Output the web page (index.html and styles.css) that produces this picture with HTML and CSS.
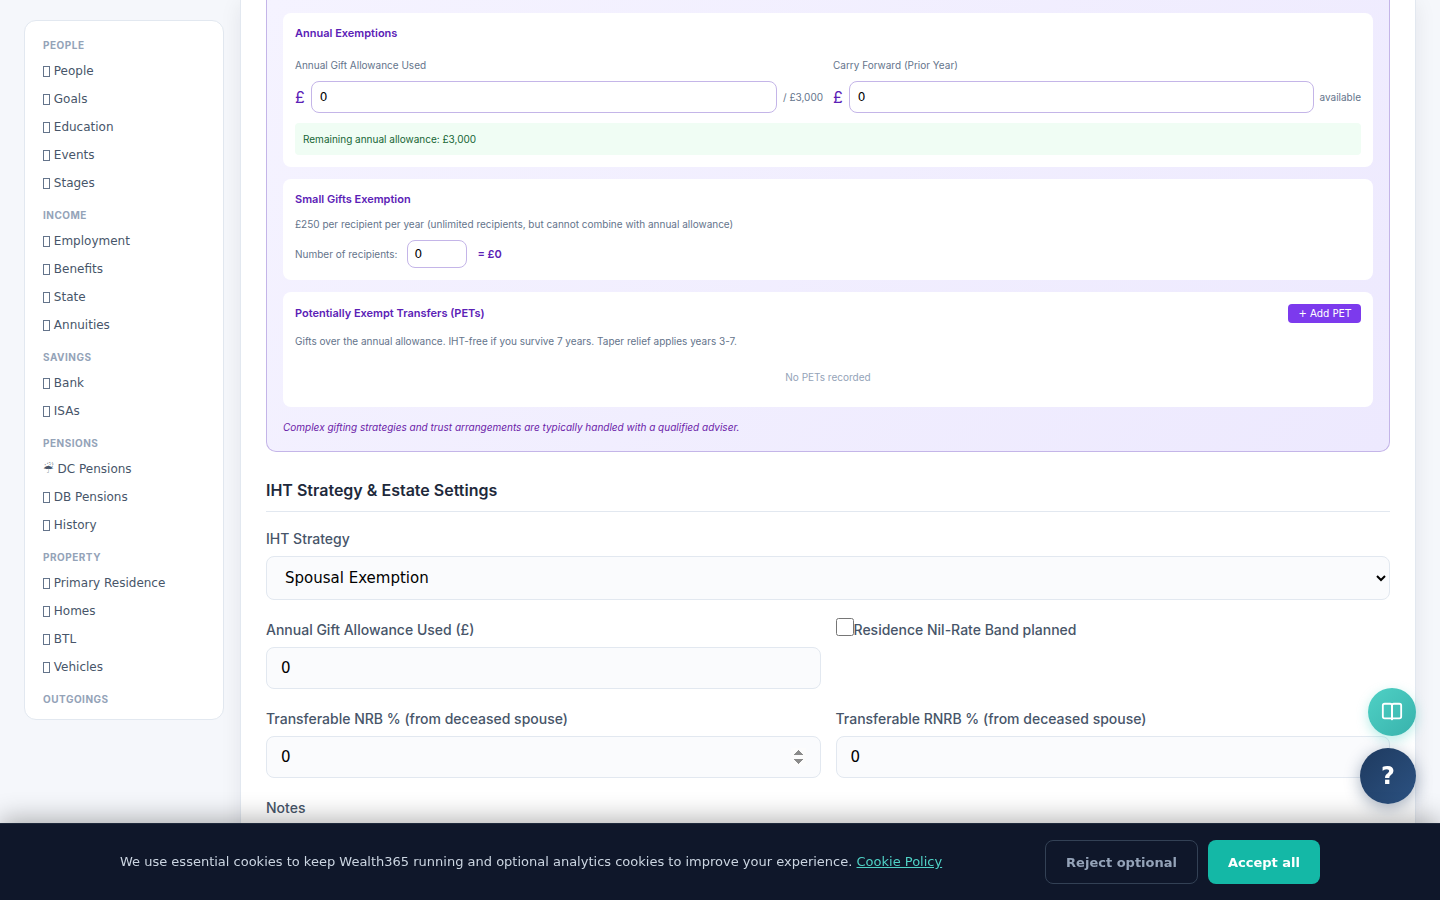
FILE: index.html
```
<!DOCTYPE html>
<html lang="en-GB">
<head>
    <meta charset="UTF-8">
    <meta name="viewport" content="width=device-width, initial-scale=1.0">
    <title>Wealth365 - Estate Planning</title>
    <link rel="stylesheet" href="styles.css">
</head>
<body>
    <div class="layout">
        <nav class="sidebar">
            <h4>People</h4>
            <a href="#people"><span class="icon"></span> People</a>
            <a href="#goals"><span class="icon"></span> Goals</a>
            <a href="#education"><span class="icon"></span> Education</a>
            <a href="#events"><span class="icon"></span> Events</a>
            <a href="#stages"><span class="icon"></span> Stages</a>
            <h4>Income</h4>
            <a href="#employment"><span class="icon"></span> Employment</a>
            <a href="#benefits"><span class="icon"></span> Benefits</a>
            <a href="#state"><span class="icon"></span> State</a>
            <a href="#annuities"><span class="icon"></span> Annuities</a>
            <h4>Savings</h4>
            <a href="#bank"><span class="icon"></span> Bank</a>
            <a href="#isas"><span class="icon"></span> ISAs</a>
            <h4>Pensions</h4>
            <a href="#dc">☔&#xFE0E; DC Pensions</a>
            <a href="#db"><span class="icon"></span> DB Pensions</a>
            <a href="#history"><span class="icon"></span> History</a>
            <h4>Property</h4>
            <a href="#residence"><span class="icon"></span> Primary Residence</a>
            <a href="#homes"><span class="icon"></span> Homes</a>
            <a href="#btl"><span class="icon"></span> BTL</a>
            <a href="#vehicles"><span class="icon"></span> Vehicles</a>
            <h4>Outgoings</h4>
        </nav>

        <main class="content">
            <section class="gifting">
                <div class="gift-card">
                    <h5>Annual Exemptions</h5>
                    <div class="gift-grid">
                        <div>
                            <label for="giftUsed">Annual Gift Allowance Used</label>
                            <div class="money-row">
                                <span class="pound">£</span>
                                <input type="text" id="giftUsed" value="0">
                                <span class="hint">/ £3,000</span>
                            </div>
                        </div>
                        <div>
                            <label for="carryForward">Carry Forward (Prior Year)</label>
                            <div class="money-row">
                                <span class="pound">£</span>
                                <input type="text" id="carryForward" value="0">
                                <span class="hint">available</span>
                            </div>
                        </div>
                    </div>
                    <div class="remaining">Remaining annual allowance: £3,000</div>
                </div>

                <div class="gift-card small-gifts">
                    <h5>Small Gifts Exemption</h5>
                    <p>£250 per recipient per year (unlimited recipients, but cannot combine with annual allowance)</p>
                    <div class="recipients">
                        <label for="recipients">Number of recipients:</label>
                        <input type="text" id="recipients" value="0">
                        <strong>= £0</strong>
                    </div>
                </div>

                <div class="gift-card pets">
                    <div class="pets-header">
                        <h5>Potentially Exempt Transfers (PETs)</h5>
                        <button type="button" class="add-pet">+ Add PET</button>
                    </div>
                    <p>Gifts over the annual allowance. IHT-free if you survive 7 years. Taper relief applies years 3-7.</p>
                    <div class="empty">No PETs recorded</div>
                </div>

                <p class="adviser-note">Complex gifting strategies and trust arrangements are typically handled with a qualified adviser.</p>
            </section>

            <h3>IHT Strategy &amp; Estate Settings</h3>

            <form class="estate-form">
                <div class="field full">
                    <label for="strategy">IHT Strategy</label>
                    <select id="strategy">
                        <option>Spousal Exemption</option>
                    </select>
                </div>
                <div class="field">
                    <label for="annualGift">Annual Gift Allowance Used (£)</label>
                    <input type="text" id="annualGift" value="0">
                </div>
                <div class="field check">
                    <input type="checkbox" id="rnrb">
                    <label for="rnrb">Residence Nil-Rate Band planned</label>
                </div>
                <div class="field">
                    <label for="nrbPct">Transferable NRB % (from deceased spouse)</label>
                    <input type="number" id="nrbPct" class="spinner" value="0">
                </div>
                <div class="field">
                    <label for="rnrbPct">Transferable RNRB % (from deceased spouse)</label>
                    <input type="number" id="rnrbPct" value="0">
                </div>
                <div class="field full">
                    <label for="notes">Notes</label>
                    <textarea id="notes" rows="4"></textarea>
                </div>
            </form>
        </main>
    </div>

    <div class="floating">
        <button type="button" class="guide-btn" aria-label="Guide">
            <svg width="22" height="22" viewBox="0 0 24 24" fill="none" stroke="currentColor" stroke-width="2" stroke-linecap="round" stroke-linejoin="round">
                <path d="M12 5a2 2 0 0 0-2-2H4a2 2 0 0 0-2 2v12a2 2 0 0 0 2 2h7a1 1 0 0 1 1 1z"/>
                <path d="M12 5a2 2 0 0 1 2-2h6a2 2 0 0 1 2 2v12a2 2 0 0 1-2 2h-7a1 1 0 0 0-1 1z"/>
            </svg>
        </button>
        <button type="button" class="help-btn">?</button>
    </div>

    <div class="cookie-bar">
        <div class="cookie-inner">
            <p>We use essential cookies to keep Wealth365 running and optional analytics cookies to improve your experience. <a href="#cookies">Cookie Policy</a></p>
            <div class="cookie-actions">
                <button type="button" class="reject">Reject optional</button>
                <button type="button" class="accept">Accept all</button>
            </div>
        </div>
    </div>
</body>
</html>
```
FILE: styles.css
```
* {
    box-sizing: border-box;
}

body {
    margin: 0;
    height: 100vh;
    overflow: hidden;
    background: #f5f7fb;
    color: #1e293b;
    font-family: Inter, sans-serif;
    font-size: 14px;
}

h3, h4, h5, p {
    margin: 0;
}

input, select, textarea, button {
    font-family: "DejaVu Sans", sans-serif;
}

.layout {
    display: flex;
    gap: 16px;
    align-items: flex-start;
    padding: 0 24px;
}

/* Sidebar */
.sidebar {
    flex: 0 0 200px;
    height: calc(100vh - 200px);
    margin-top: 20px;
    padding: 16px 18px;
    overflow: hidden;
    background: #fff;
    border: 1px solid #e2e8f0;
    border-radius: 12px;
}

.sidebar h4 {
    margin: 10px 0 4px;
    font-size: 10px;
    font-weight: 700;
    line-height: 16px;
    letter-spacing: 0.5px;
    text-transform: uppercase;
    color: #94a3b8;
}

.sidebar h4:first-child {
    margin-top: 0;
}

.sidebar a {
    display: block;
    font-family: "DejaVu Sans", sans-serif;
    font-size: 12px;
    line-height: 28px;
    color: #475569;
    text-decoration: none;
    white-space: nowrap;
}

.sidebar .icon {
    display: inline-block;
    width: 7px;
    height: 11px;
    border: 1px solid #64748b;
    vertical-align: -2px;
}

/* Main panel */
.content {
    flex: 1;
    min-width: 0;
    padding: 0 25px 24px;
    background: #fff;
    border: 1px solid #e2e8f0;
    border-top: none;
    box-shadow: 0 4px 20px rgba(15, 23, 42, 0.08);
}

.gifting {
    display: flex;
    flex-direction: column;
    gap: 12px;
    padding: 13px 16px 16px;
    background: linear-gradient(135deg, #f5f3ff, #ede9fe);
    border: 1px solid #c4b5e8;
    border-top: none;
    border-radius: 0 0 10px 10px;
    font-size: 10px;
    line-height: 16px;
    color: #64748b;
}

.gift-card {
    padding: 12px;
    background: #fff;
    border-radius: 8px;
}

.gift-card h5 {
    font-size: 11px;
    font-weight: 600;
    line-height: 17px;
    color: #5b21b6;
}

.gift-grid {
    display: grid;
    grid-template-columns: 1fr 1fr;
    gap: 10px;
    margin-top: 15px;
}

.gift-grid label {
    display: block;
    margin-bottom: 8px;
}

.money-row {
    display: flex;
    align-items: center;
    gap: 6px;
}

.pound {
    font-size: 16px;
    color: #5b21b6;
}

.gifting input {
    min-width: 0;
    border: 1px solid #c4b5e8;
    border-radius: 8px;
    background: #fff;
    font-size: 12px;
    color: #000;
}

.money-row input {
    flex: 1;
    height: 32px;
    padding: 0 8px;
}

.remaining {
    margin-top: 10px;
    padding: 8px;
    background: #f0fdf4;
    border-radius: 4px;
    color: #166534;
}

.small-gifts p {
    margin: 8px 0;
}

.recipients {
    display: flex;
    align-items: center;
    gap: 10px;
}

.recipients input {
    width: 60px;
    height: 28px;
    padding: 0 6px;
}

.recipients strong {
    font-size: 11px;
    font-weight: 600;
    color: #5b21b6;
}

.pets-header {
    display: flex;
    justify-content: space-between;
    align-items: center;
    margin-bottom: 10px;
}

.add-pet {
    height: 19px;
    padding: 0 10px;
    background: #7c3aed;
    border: none;
    border-radius: 4px;
    font-size: 10px;
    color: #fff;
}

.empty {
    margin-top: 10px;
    padding: 10px;
    text-align: center;
    color: #94a3b8;
}

.adviser-note {
    font-style: italic;
    color: #6b21a8;
}

.content h3 {
    margin: 25px 0 15px;
    padding-bottom: 8px;
    border-bottom: 1px solid #e2e8f0;
    font-size: 16px;
    font-weight: 600;
    line-height: 26px;
}

.estate-form {
    display: grid;
    grid-template-columns: 1fr 1fr;
    gap: 18px 15px;
}

.full {
    grid-column: 1 / -1;
}

.field label {
    display: block;
    margin-bottom: 6px;
    font-size: 14px;
    font-weight: 500;
    line-height: 23px;
    color: #475569;
}

.field input, .field select, .field textarea {
    display: block;
    width: 100%;
    height: 42px;
    padding: 0 14px;
    border: 1px solid #e2e8f0;
    border-radius: 8px;
    background: #fafbfd;
    font-size: 15px;
    color: #000;
}

.field select {
    height: 44px;
    padding-right: 0;
}

.field textarea {
    height: 80px;
}

.field .spinner::-webkit-inner-spin-button {
    opacity: 1;
}

.check {
    display: flex;
    align-items: flex-start;
}

.check input {
    width: 18px;
    height: 18px;
    margin: 0;
}

/* Floating buttons */
.floating {
    position: fixed;
    right: 24px;
    bottom: 96px;
    display: flex;
    flex-direction: column;
    align-items: flex-end;
    gap: 12px;
}

.floating button {
    display: flex;
    align-items: center;
    justify-content: center;
    padding: 0;
    border: none;
    border-radius: 50%;
    color: #fff;
}

.guide-btn {
    width: 48px;
    height: 48px;
    background: linear-gradient(135deg, #4fd1c5, #38b2ac);
    box-shadow: 0 4px 12px rgba(79, 209, 197, 0.4);
}

.help-btn {
    width: 56px;
    height: 56px;
    background: linear-gradient(135deg, #1e3a5f, #2c5282);
    box-shadow: 0 4px 16px rgba(30, 58, 95, 0.4);
    font-size: 24px;
    font-weight: 700;
}

/* Cookie banner */
.cookie-bar {
    position: fixed;
    left: 0;
    right: 0;
    bottom: 0;
    padding: 16px 24px;
    background: #0f172a;
    border-top: 1px solid #1e293b;
    box-shadow: 0 -4px 24px rgba(0, 0, 0, 0.3);
    font-family: "DejaVu Sans", sans-serif;
    font-size: 13px;
    line-height: 20px;
    color: #cbd5e1;
}

.cookie-inner {
    display: flex;
    align-items: center;
    justify-content: space-between;
    max-width: 1200px;
    margin: 0 auto;
}

.cookie-bar a {
    color: #4fd1c5;
}

.cookie-actions {
    display: flex;
    gap: 10px;
}

.cookie-actions button {
    height: 44px;
    padding: 0 20px;
    border: none;
    border-radius: 8px;
    font-size: 13px;
    font-weight: 600;
}

.cookie-actions .reject {
    background: transparent;
    border: 1px solid #334155;
    color: #94a3b8;
}

.cookie-actions .accept {
    background: #14b8a6;
    color: #fff;
}
```
